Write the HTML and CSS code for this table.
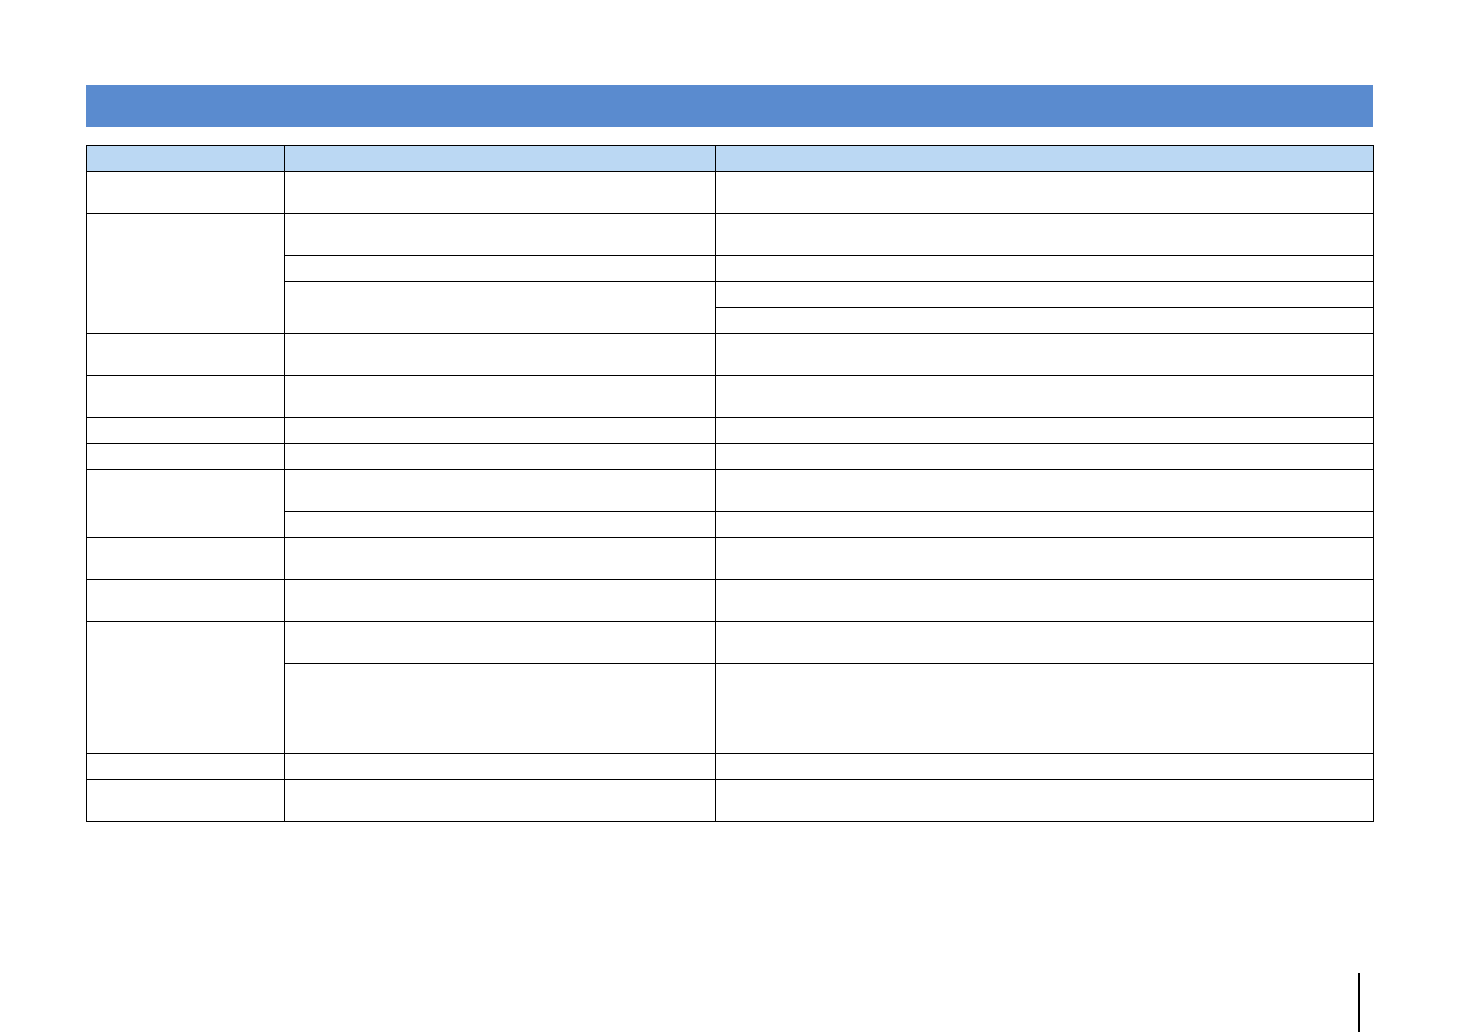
FILE: index.html
```html
<!DOCTYPE html>
<html>
<head>
<meta charset="utf-8">
<link rel="stylesheet" href="styles.css">
</head>
<body>
<div class="page">
  <div class="title-bar"></div>
  <div class="grid">
    <div class="cell head"></div><div class="cell head"></div><div class="cell head"></div>

    <div class="cell"></div><div class="cell"></div><div class="cell"></div>

    <div class="cell col1 rows4"></div><div class="cell"></div><div class="cell"></div>
    <div class="cell"></div><div class="cell"></div>
    <div class="cell col2 rows2"></div><div class="cell"></div>
    <div class="cell"></div>

    <div class="cell"></div><div class="cell"></div><div class="cell"></div>
    <div class="cell"></div><div class="cell"></div><div class="cell"></div>
    <div class="cell"></div><div class="cell"></div><div class="cell"></div>
    <div class="cell"></div><div class="cell"></div><div class="cell"></div>

    <div class="cell col1 rows2"></div><div class="cell"></div><div class="cell"></div>
    <div class="cell"></div><div class="cell"></div>

    <div class="cell"></div><div class="cell"></div><div class="cell"></div>
    <div class="cell"></div><div class="cell"></div><div class="cell"></div>

    <div class="cell col1 rows2"></div><div class="cell"></div><div class="cell"></div>
    <div class="cell"></div><div class="cell"></div>

    <div class="cell"></div><div class="cell"></div><div class="cell"></div>
    <div class="cell"></div><div class="cell"></div><div class="cell"></div>
  </div>
  <div class="page-mark"></div>
</div>
</body>
</html>
```
FILE: styles.css
```css
html, body {
  margin: 0;
  padding: 0;
  background: #ffffff;
  font-family: "Liberation Sans", Arial, sans-serif;
}
.page {
  padding: 85px 0 0 86px;
  width: 1372px;
  height: 947px;
  overflow: hidden;
}
.title-bar {
  width: 1287px;
  height: 42px;
  background: #5a8bcf;
  margin-bottom: 18px;
}
.grid {
  display: grid;
  width: 1288px;
  box-sizing: border-box;
  background: #000000;
  padding: 1px;
  gap: 1px;
  grid-template-columns: 197px 430px 657px;
  grid-template-rows: 25px 41px 41px 25px 25px 25px 41px 41px 25px 25px 41px 25px 41px 41px 41px 89px 25px 41px;
}
.cell {
  background: #ffffff;
}
.cell.head {
  background: #bbd8f3;
}
.col1 {
  grid-column: 1;
}
.col2 {
  grid-column: 2;
}
.rows4 {
  grid-row: span 4;
}
.rows2 {
  grid-row: span 2;
}
.page-mark {
  width: 2px;
  height: 59px;
  background: #000000;
  margin: 151px 0 0 1272px;
}
```
